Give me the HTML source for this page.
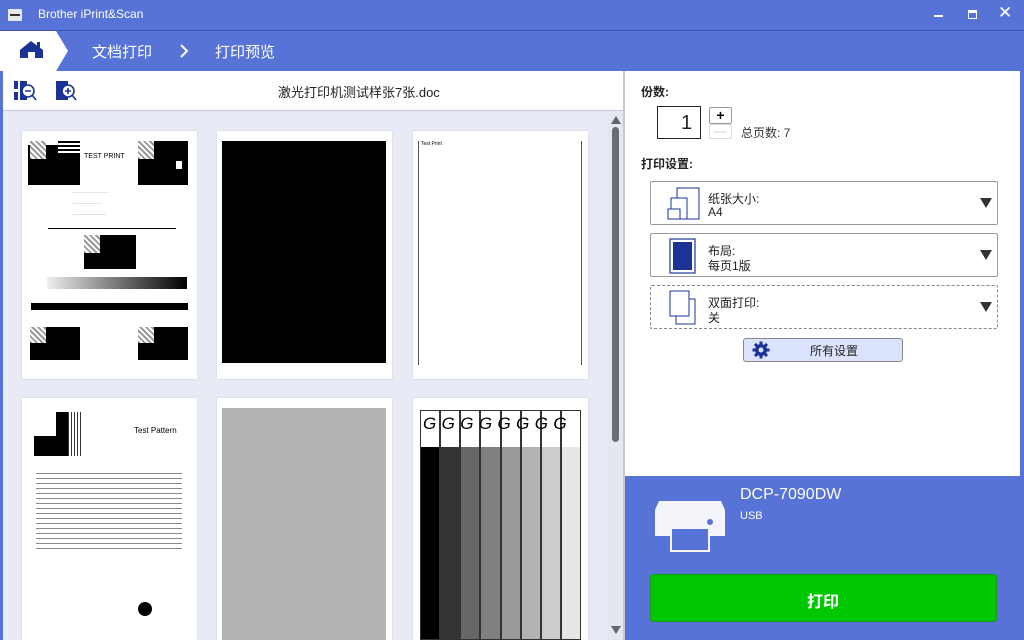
<!DOCTYPE html>
<html><head><meta charset="utf-8"><style>
*{margin:0;padding:0;box-sizing:border-box}
body{width:1024px;height:640px;overflow:hidden;background:#5773d8;font-family:"Liberation Sans","Noto Sans CJK SC",sans-serif;position:relative}
.a{position:absolute}
.t{color:#fff}
.page{position:absolute;background:#fff;box-shadow:0 0 2px #c8ccd8;overflow:hidden}
.dd{position:absolute;left:650px;width:348px;height:44px;border:1px solid #9a9a9a;border-radius:2px;background:#fff}
.dd .l1{position:absolute;left:57px;top:8px;font-size:12px;color:#222}
.dd .l2{position:absolute;left:57px;top:23px;font-size:12px;color:#222}
.dd .ar{position:absolute;right:5px;top:16px;width:0;height:0;border-left:6px solid transparent;border-right:6px solid transparent;border-top:10px solid #333}
</style></head><body>
<!-- title bar -->
<div class="a" style="left:8px;top:9px;width:14px;height:12px;background:#e8e8f0;border-radius:1px"></div>
<div class="a" style="left:10px;top:14px;width:10px;height:2px;background:#333"></div>
<div class="a t" style="left:38px;top:7px;font-size:12px">Brother iPrint&amp;Scan</div>
<div class="a" style="left:934px;top:15px;width:9px;height:2px;background:#fff"></div>
<div class="a" style="left:968px;top:10px;width:9px;height:9px;border:1px solid #fff;border-top-width:3px"></div>
<div class="a t" style="left:998px;top:3px;font-size:17px">✕</div>
<div class="a" style="left:0;top:30px;width:1024px;height:1px;background:#3f55b0"></div>
<!-- breadcrumb -->
<svg class="a" style="left:0;top:31px" width="70" height="40"><path d="M0 0H56L68 20L56 40H0Z" fill="#fff"/><path d="M20 27V19L31 10L43 19V27H35V21H28V27Z" fill="#1b3397"/><rect x="37" y="11" width="3" height="6" fill="#1b3397"/></svg>
<div class="a t" style="left:92px;top:41px;font-size:15px">文档打印</div>
<svg class="a" style="left:178px;top:43px" width="12" height="16"><path d="M3 2L9 8L3 14" stroke="#fff" stroke-width="2" fill="none"/></svg>
<div class="a t" style="left:215px;top:41px;font-size:15px">打印预览</div>
<!-- left panel -->
<div class="a" style="left:3px;top:71px;width:621px;height:569px;background:#e8ebf5"></div>
<div class="a" style="left:3px;top:71px;width:621px;height:40px;background:#fff;border-bottom:1px solid #c8c8d0"></div>
<svg class="a" style="left:13px;top:80px" width="70" height="24"><rect x="1" y="1" width="4" height="8" fill="#1b3397"/><rect x="1" y="12" width="4" height="8" fill="#1b3397"/><rect x="7" y="1" width="7" height="19" fill="#1b3397"/><circle cx="15" cy="11" r="6" fill="#fff" stroke="#1b3397" stroke-width="1.6"/><path d="M12 11H18M19 15L23 20" stroke="#1b3397" stroke-width="1.6"/><rect x="43" y="1" width="12" height="19" fill="#1b3397"/><circle cx="55" cy="11" r="6" fill="#fff" stroke="#1b3397" stroke-width="1.6"/><path d="M52 11H58M55 8V14M59 15L63 20" stroke="#1b3397" stroke-width="1.6"/></svg>
<div class="a" style="left:278px;top:82px;font-size:13px;color:#222">激光打印机测试样张7张.doc</div>
<!-- scrollbar -->
<div class="a" style="left:608px;top:112px;width:15px;height:528px;background:#e4e6f0"></div>
<div class="a" style="left:611px;top:116px;border-left:5px solid transparent;border-right:5px solid transparent;border-bottom:8px solid #666"></div>
<div class="a" style="left:612px;top:127px;width:7px;height:315px;background:#6b6b78;border-radius:4px"></div>
<div class="a" style="left:611px;top:626px;border-left:5px solid transparent;border-right:5px solid transparent;border-top:8px solid #666"></div>
<div class="a" style="left:623px;top:71px;width:2px;height:569px;background:#c8c8d0"></div>
<!-- pages row1 -->
<div class="page" style="left:22px;top:131px;width:175px;height:248px">
 <div class="a" style="left:6px;top:14px;width:52px;height:40px;background:#000"></div>
 <div class="a" style="left:8px;top:10px;width:16px;height:18px;background:repeating-linear-gradient(45deg,#999 0 2px,#fff 2px 4px)"></div>
 <div class="a" style="left:36px;top:10px;width:22px;height:14px;background:repeating-linear-gradient(180deg,#000 0 2px,#fff 2px 4px)"></div>
 <div class="a" style="left:116px;top:10px;width:50px;height:44px;background:#000"></div>
 <div class="a" style="left:116px;top:10px;width:16px;height:18px;background:repeating-linear-gradient(45deg,#999 0 2px,#fff 2px 4px)"></div>
 <div class="a" style="left:152px;top:28px;width:10px;height:12px;background:#fff;border:2px solid #000"></div>
 <div class="a" style="left:62px;top:22px;font-size:7px">TEST PRINT</div>
 <div class="a" style="left:50px;top:55px;font-size:4px;line-height:11px;color:#333">.................................<br>..........................<br>...............................</div>
 <div class="a" style="left:26px;top:97px;width:128px;height:1px;background:#000"></div>
 <div class="a" style="left:62px;top:104px;width:52px;height:34px;background:#000"></div>
 <div class="a" style="left:62px;top:104px;width:16px;height:18px;background:repeating-linear-gradient(45deg,#999 0 2px,#fff 2px 4px)"></div>
 <div class="a" style="left:25px;top:146px;width:140px;height:12px;background:linear-gradient(90deg,#eee,#000)"></div>
 <div class="a" style="left:9px;top:172px;width:157px;height:7px;background:#000"></div>
 <div class="a" style="left:8px;top:196px;width:50px;height:33px;background:#000"></div>
 <div class="a" style="left:116px;top:196px;width:50px;height:33px;background:#000"></div>
 <div class="a" style="left:8px;top:196px;width:16px;height:16px;background:repeating-linear-gradient(45deg,#999 0 2px,#fff 2px 4px)"></div>
 <div class="a" style="left:116px;top:196px;width:16px;height:16px;background:repeating-linear-gradient(45deg,#999 0 2px,#fff 2px 4px)"></div>
</div>
<div class="page" style="left:217px;top:131px;width:175px;height:248px"><div class="a" style="left:5px;top:10px;width:164px;height:222px;background:#000"></div></div>
<div class="page" style="left:413px;top:131px;width:175px;height:248px"><div class="a" style="left:5px;top:10px;width:164px;height:224px;border-left:1px solid #555;border-right:1px solid #555"></div><div class="a" style="left:8px;top:10px;font-size:5px">Test Print</div></div>
<!-- pages row2 -->
<div class="page" style="left:22px;top:398px;width:175px;height:242px">
 <div class="a" style="left:12px;top:38px;width:22px;height:20px;background:#000"></div>
 <div class="a" style="left:34px;top:14px;width:12px;height:44px;background:#000"></div>
 <div class="a" style="left:46px;top:14px;width:14px;height:44px;background:repeating-linear-gradient(90deg,#333 0 1px,#fff 1px 3px)"></div>
 <div class="a" style="left:112px;top:28px;font-size:8px">Test Pattern</div>
 <div class="a" style="left:14px;top:75px;width:146px;height:80px;background:repeating-linear-gradient(180deg,#888 0 1px,#fff 1px 5px)"></div>
 <div class="a" style="left:116px;top:204px;width:14px;height:14px;border-radius:50%;background:#000"></div>
</div>
<div class="page" style="left:217px;top:398px;width:175px;height:242px"><div class="a" style="left:5px;top:10px;width:164px;height:232px;background:#b4b4b4"></div></div>
<div class="page" style="left:413px;top:398px;width:175px;height:242px">
 <div style="position:absolute;left:7px;top:12px;width:161px;height:230px;display:flex">
  <div style="flex:1;border:1px solid #333;background:linear-gradient(#fff 0 36px,#000 36px)"></div>
  <div style="flex:1;border:1px solid #333;background:linear-gradient(#fff 0 36px,#333 36px)"></div>
  <div style="flex:1;border:1px solid #333;background:linear-gradient(#fff 0 36px,#666 36px)"></div>
  <div style="flex:1;border:1px solid #333;background:linear-gradient(#fff 0 36px,#808080 36px)"></div>
  <div style="flex:1;border:1px solid #333;background:linear-gradient(#fff 0 36px,#999 36px)"></div>
  <div style="flex:1;border:1px solid #333;background:linear-gradient(#fff 0 36px,#b3b3b3 36px)"></div>
  <div style="flex:1;border:1px solid #333;background:linear-gradient(#fff 0 36px,#ccc 36px)"></div>
  <div style="flex:1;border:1px solid #333;background:linear-gradient(#fff 0 36px,#e6e6e6 36px)"></div>
 </div>
 <div class="a" style="left:10px;top:16px;font-size:17px;font-style:italic;letter-spacing:5.4px">GGGGGGGG</div>
</div>
<!-- right panel -->
<div class="a" style="left:625px;top:71px;width:395px;height:405px;background:#fff"></div>
<div class="a" style="left:641px;top:83px;font-size:12px;font-weight:bold;color:#222">份数:</div>
<div class="a" style="left:657px;top:106px;width:44px;height:33px;border:1px solid #222"></div>
<div class="a" style="left:681px;top:112px;font-size:20px;color:#222">1</div>
<div class="a" style="left:709px;top:107px;width:23px;height:17px;border:1px solid #999;border-radius:2px;font-size:14px;text-align:center;line-height:14px;font-weight:bold">+</div>
<div class="a" style="left:709px;top:124px;width:23px;height:15px;border:1px solid #ddd;border-radius:2px;color:#ccc;font-size:12px;text-align:center;line-height:12px">—</div>
<div class="a" style="left:741px;top:124px;font-size:12px;color:#333">总页数: 7</div>
<div class="a" style="left:641px;top:155px;font-size:12px;font-weight:bold;color:#222">打印设置:</div>
<div class="dd" style="top:181px"><svg class="a" style="left:16px;top:5px" width="34" height="34"><rect x="10" y="1" width="22" height="31" fill="#fff" stroke="#1b3397"/><rect x="4" y="11" width="16" height="21" fill="#fff" stroke="#1b3397"/><rect x="1" y="22" width="12" height="10" fill="#fff" stroke="#1b3397"/></svg><div class="l1">纸张大小:</div><div class="l2">A4</div><div class="ar"></div></div>
<div class="dd" style="top:233px"><svg class="a" style="left:18px;top:4px" width="28" height="36"><rect x="1" y="1" width="25" height="34" fill="#fff" stroke="#1b3397" stroke-width="1.2"/><rect x="4" y="4" width="19" height="28" fill="#1b3397"/></svg><div class="l1">布局:</div><div class="l2">每页1版</div><div class="ar"></div></div>
<div class="dd" style="top:285px;border:1px dashed #888"><svg class="a" style="left:18px;top:4px" width="28" height="36"><rect x="7" y="9" width="19" height="25" fill="#fff" stroke="#1b3397"/><rect x="1" y="1" width="19" height="25" fill="#fff" stroke="#1b3397"/></svg><div class="l1">双面打印:</div><div class="l2">关</div><div class="ar"></div></div>
<div class="a" style="left:743px;top:338px;width:160px;height:24px;background:#dbe3fc;border:1px solid #888;border-radius:3px"></div>
<svg class="a" style="left:752px;top:341px" width="18" height="18" viewBox="0 0 18 18"><g fill="#1b3397"><circle cx="9" cy="9" r="6"/><rect x="7.5" y="0.5" width="3" height="17"/><rect x="0.5" y="7.5" width="17" height="3"/><rect x="7.5" y="0.5" width="3" height="17" transform="rotate(45 9 9)"/><rect x="7.5" y="0.5" width="3" height="17" transform="rotate(-45 9 9)"/></g><circle cx="9" cy="9" r="2.5" fill="#dbe3fc"/></svg>
<div class="a" style="left:810px;top:342px;font-size:12px;color:#222">所有设置</div>
<!-- printer -->
<svg class="a" style="left:655px;top:498px" width="72" height="55"><path d="M4 3H66L70 12V38H0V12Z" fill="#f4f5fa"/><circle cx="55" cy="24" r="3" fill="#5773d8"/><rect x="16" y="30" width="38" height="23" fill="#5773d8" stroke="#f4f5fa" stroke-width="2"/></svg>
<div class="a t" style="left:740px;top:486px;font-size:16px">DCP-7090DW</div>
<div class="a t" style="left:740px;top:510px;font-size:11px">USB</div>
<div class="a" style="left:650px;top:574px;width:347px;height:48px;background:#00c800;border:1px solid #1a9a1a;border-radius:3px"></div>
<div class="a t" style="left:807px;top:588px;font-size:16px;font-weight:bold">打印</div>
</body></html>
